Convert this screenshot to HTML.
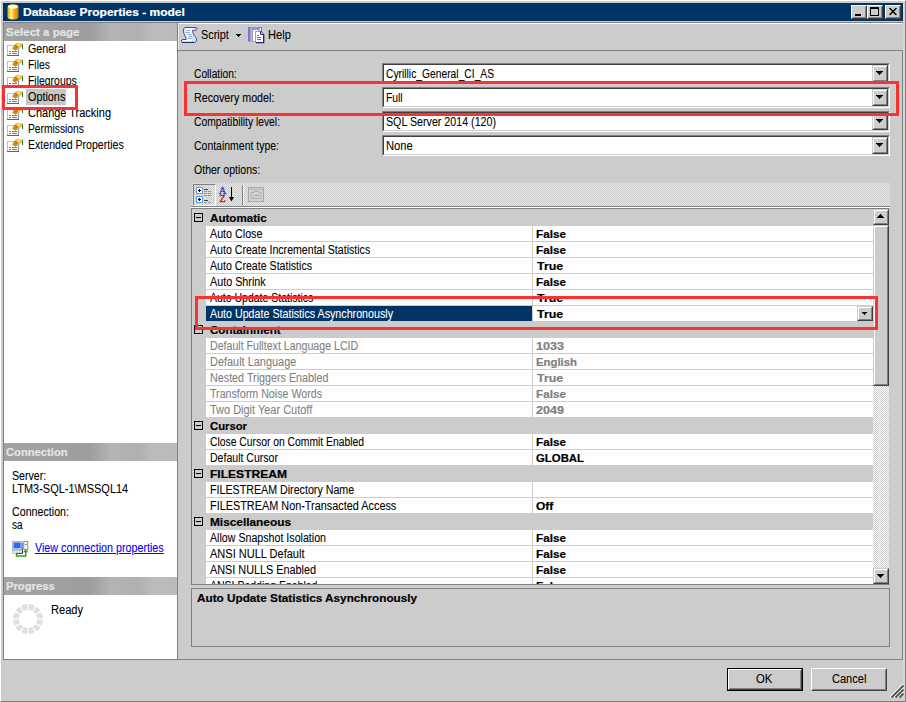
<!DOCTYPE html>
<html><head><meta charset="utf-8"><title>Database Properties - model</title>
<style>
html,body{margin:0;padding:0;}
body{width:906px;height:702px;position:relative;overflow:hidden;background:#cccccc;font:12px "Liberation Sans",sans-serif;}
div,span,svg{position:absolute;box-sizing:border-box;}
.t{white-space:pre;font:12px/14px "Liberation Sans",sans-serif;transform-origin:0 50%;-webkit-text-stroke:0.08px currentColor;}
.b{font:bold 11px/13px "Liberation Sans",sans-serif;-webkit-text-stroke:0.2px currentColor;}
.raised{background:#cccccc;border:1px solid;border-color:#cccccc #404040 #404040 #cccccc;}
.raised:before{content:"";position:absolute;left:0;top:0;right:0;bottom:0;border:1px solid;border-color:#fff #808080 #808080 #fff;}
.btn{background:#cccccc;border:1px solid;border-color:#fff #404040 #404040 #fff;}
.btn:before{content:"";position:absolute;left:0;top:0;right:0;bottom:0;border:1px solid;border-color:#cccccc #808080 #808080 #cccccc;}
.combo{background:#fff;border:1px solid;border-color:#808080 #fff #fff #808080;}
.combo:before{content:"";position:absolute;left:0;top:0;right:0;bottom:0;border:1px solid;border-color:#404040 #cccccc #cccccc #404040;}
.hdr{left:4px;width:173px;height:18px;background:linear-gradient(90deg,#a2a2a2 0,#9e9e9e 50%,#b4b4b4 62%,#b0b0b0 78%,#bcbcbc 86%,#bababa 100%);}
.arrow{width:0;height:0;border:solid transparent;border-width:3px 3px 0 3px;border-top-color:#000;}
.redbox{border:3px solid #fa3232;}
</style></head><body>

<div style="left:0;top:0;width:906px;height:702px;border:1px solid;border-color:#fff #808080 #808080 #fff;"></div>
<div style="left:903px;top:1px;width:2px;height:699px;background:#d6d6d6"></div>
<div style="left:3px;top:3px;width:900px;height:18px;background:#003366;"></div>
<svg style="left:6px;top:4px" width="14" height="16" viewBox="0 0 14 16"><defs><linearGradient id="cy" x1="0" x2="1" y1="0" y2="0"><stop offset="0" stop-color="#f0a020"/><stop offset=".18" stop-color="#ffcc40"/><stop offset=".36" stop-color="#ffff90"/><stop offset=".5" stop-color="#ffc060"/><stop offset=".68" stop-color="#ff9a10"/><stop offset=".85" stop-color="#d09a00"/><stop offset="1" stop-color="#c08000"/></linearGradient></defs><path d="M1.5 3 Q1.5 0.5 7 0.5 Q12.5 0.5 12.5 3 V13 Q12.5 15.5 7 15.5 Q1.5 15.5 1.5 13 Z" fill="url(#cy)"/><ellipse cx="7" cy="2.6" rx="5" ry="2" fill="#ffffd0"/></svg>
<div class="btn" style="left:851px;top:5px;width:16px;height:14px;">
<div style="left:3px;top:8px;width:6px;height:2px;background:#000"></div>
</div>
<div class="btn" style="left:867px;top:5px;width:16px;height:14px;">
<div style="left:2px;top:1px;width:9px;height:9px;border:1px solid #000;border-top-width:2px"></div>
</div>
<div class="btn" style="left:885px;top:5px;width:16px;height:14px;">
<svg style="left:3px;top:2px" width="8" height="7" viewBox="0 0 8 7"><path d="M0.6 0L7.4 7M7.4 0L0.6 7" stroke="#000" stroke-width="1.5" fill="none"/></svg>
</div>
<div style="left:3px;top:22px;width:900px;height:1px;background:#808080"></div>
<div style="left:3px;top:22px;width:1px;height:638px;background:#808080"></div>
<div style="left:4px;top:23px;width:173px;height:636px;background:#fff"></div>
<div style="left:177px;top:23px;width:1px;height:636px;background:#808080"></div>
<div style="left:178px;top:23px;width:1px;height:27px;background:#ececec"></div>
<div style="left:178px;top:23px;width:724px;height:1px;background:#fff"></div>
<div style="left:3px;top:659px;width:900px;height:1px;background:#808080"></div>
<div style="left:902px;top:50px;width:1px;height:610px;background:#808080"></div>
<div class="hdr" style="top:23px"></div>
<div class="hdr" style="top:443px"></div>
<div class="hdr" style="top:577px"></div>
<div style="left:26px;top:89px;width:40px;height:16px;background:#c6c6c6"></div>
<svg style="left:7px;top:42px" width="16" height="14" viewBox="0 0 16 14"><rect x="0.5" y="3.5" width="11" height="10" fill="#fff" stroke="#b8b8f0"/><path d="M0 13.5h12" stroke="#606060"/><path d="M11.5 4v9" stroke="#9090c0"/><path d="M2 9.5h2M5 9.5h5M2 11.5h2M5 11.5h5" stroke="#7070e0"/><path d="M5 6.5 L8 2 Q11 0.2 14.6 1 L15 4.6 L12 6 L9 8.8 Z" fill="#f0b030"/><path d="M9.5 2 L11.5 1 L14 1.6 L13.5 4 L11.5 4.5 Z" fill="#ffd860"/><path d="M6 6l2.4 2.4M7 4.4l2.6 2.8M8 3l2.4 2.6M6.2 6.8l3-3.6M7.6 8l3-3.6" stroke="#806010" stroke-width=".7"/><rect x="15" y="2" width="1" height="5" fill="#208040"/></svg>
<svg style="left:7px;top:58px" width="16" height="14" viewBox="0 0 16 14"><rect x="0.5" y="3.5" width="11" height="10" fill="#fff" stroke="#b8b8f0"/><path d="M0 13.5h12" stroke="#606060"/><path d="M11.5 4v9" stroke="#9090c0"/><path d="M2 9.5h2M5 9.5h5M2 11.5h2M5 11.5h5" stroke="#7070e0"/><path d="M5 6.5 L8 2 Q11 0.2 14.6 1 L15 4.6 L12 6 L9 8.8 Z" fill="#f0b030"/><path d="M9.5 2 L11.5 1 L14 1.6 L13.5 4 L11.5 4.5 Z" fill="#ffd860"/><path d="M6 6l2.4 2.4M7 4.4l2.6 2.8M8 3l2.4 2.6M6.2 6.8l3-3.6M7.6 8l3-3.6" stroke="#806010" stroke-width=".7"/><rect x="15" y="2" width="1" height="5" fill="#208040"/></svg>
<svg style="left:7px;top:74px" width="16" height="14" viewBox="0 0 16 14"><rect x="0.5" y="3.5" width="11" height="10" fill="#fff" stroke="#b8b8f0"/><path d="M0 13.5h12" stroke="#606060"/><path d="M11.5 4v9" stroke="#9090c0"/><path d="M2 9.5h2M5 9.5h5M2 11.5h2M5 11.5h5" stroke="#7070e0"/><path d="M5 6.5 L8 2 Q11 0.2 14.6 1 L15 4.6 L12 6 L9 8.8 Z" fill="#f0b030"/><path d="M9.5 2 L11.5 1 L14 1.6 L13.5 4 L11.5 4.5 Z" fill="#ffd860"/><path d="M6 6l2.4 2.4M7 4.4l2.6 2.8M8 3l2.4 2.6M6.2 6.8l3-3.6M7.6 8l3-3.6" stroke="#806010" stroke-width=".7"/><rect x="15" y="2" width="1" height="5" fill="#208040"/></svg>
<svg style="left:7px;top:90px" width="16" height="14" viewBox="0 0 16 14"><rect x="0.5" y="3.5" width="11" height="10" fill="#fff" stroke="#b8b8f0"/><path d="M0 13.5h12" stroke="#606060"/><path d="M11.5 4v9" stroke="#9090c0"/><path d="M2 9.5h2M5 9.5h5M2 11.5h2M5 11.5h5" stroke="#7070e0"/><path d="M5 6.5 L8 2 Q11 0.2 14.6 1 L15 4.6 L12 6 L9 8.8 Z" fill="#f0b030"/><path d="M9.5 2 L11.5 1 L14 1.6 L13.5 4 L11.5 4.5 Z" fill="#ffd860"/><path d="M6 6l2.4 2.4M7 4.4l2.6 2.8M8 3l2.4 2.6M6.2 6.8l3-3.6M7.6 8l3-3.6" stroke="#806010" stroke-width=".7"/><rect x="15" y="2" width="1" height="5" fill="#208040"/></svg>
<svg style="left:7px;top:106px" width="16" height="14" viewBox="0 0 16 14"><rect x="0.5" y="3.5" width="11" height="10" fill="#fff" stroke="#b8b8f0"/><path d="M0 13.5h12" stroke="#606060"/><path d="M11.5 4v9" stroke="#9090c0"/><path d="M2 9.5h2M5 9.5h5M2 11.5h2M5 11.5h5" stroke="#7070e0"/><path d="M5 6.5 L8 2 Q11 0.2 14.6 1 L15 4.6 L12 6 L9 8.8 Z" fill="#f0b030"/><path d="M9.5 2 L11.5 1 L14 1.6 L13.5 4 L11.5 4.5 Z" fill="#ffd860"/><path d="M6 6l2.4 2.4M7 4.4l2.6 2.8M8 3l2.4 2.6M6.2 6.8l3-3.6M7.6 8l3-3.6" stroke="#806010" stroke-width=".7"/><rect x="15" y="2" width="1" height="5" fill="#208040"/></svg>
<svg style="left:7px;top:122px" width="16" height="14" viewBox="0 0 16 14"><rect x="0.5" y="3.5" width="11" height="10" fill="#fff" stroke="#b8b8f0"/><path d="M0 13.5h12" stroke="#606060"/><path d="M11.5 4v9" stroke="#9090c0"/><path d="M2 9.5h2M5 9.5h5M2 11.5h2M5 11.5h5" stroke="#7070e0"/><path d="M5 6.5 L8 2 Q11 0.2 14.6 1 L15 4.6 L12 6 L9 8.8 Z" fill="#f0b030"/><path d="M9.5 2 L11.5 1 L14 1.6 L13.5 4 L11.5 4.5 Z" fill="#ffd860"/><path d="M6 6l2.4 2.4M7 4.4l2.6 2.8M8 3l2.4 2.6M6.2 6.8l3-3.6M7.6 8l3-3.6" stroke="#806010" stroke-width=".7"/><rect x="15" y="2" width="1" height="5" fill="#208040"/></svg>
<svg style="left:7px;top:138px" width="16" height="14" viewBox="0 0 16 14"><rect x="0.5" y="3.5" width="11" height="10" fill="#fff" stroke="#b8b8f0"/><path d="M0 13.5h12" stroke="#606060"/><path d="M11.5 4v9" stroke="#9090c0"/><path d="M2 9.5h2M5 9.5h5M2 11.5h2M5 11.5h5" stroke="#7070e0"/><path d="M5 6.5 L8 2 Q11 0.2 14.6 1 L15 4.6 L12 6 L9 8.8 Z" fill="#f0b030"/><path d="M9.5 2 L11.5 1 L14 1.6 L13.5 4 L11.5 4.5 Z" fill="#ffd860"/><path d="M6 6l2.4 2.4M7 4.4l2.6 2.8M8 3l2.4 2.6M6.2 6.8l3-3.6M7.6 8l3-3.6" stroke="#806010" stroke-width=".7"/><rect x="15" y="2" width="1" height="5" fill="#208040"/></svg>
<svg style="left:12px;top:541px" width="17" height="16" viewBox="0 0 17 16"><rect x="0.5" y="0.5" width="9.5" height="8" fill="#d4d8e8" stroke="#b0b0c0"/><rect x="1.6" y="1.6" width="7" height="5.6" fill="#2868f8"/><path d="M10.2 2v7" stroke="#5058a0"/><rect x="0.3" y="9.3" width="10" height="3" fill="#e4e4ec" stroke="#a8a8b8" stroke-width=".6"/><path d="M4 12.4h6.5v-3" fill="none" stroke="#303080" stroke-width="1"/><rect x="11.7" y="0.5" width="4" height="8" fill="#f4f6fa" stroke="#9090a0"/><path d="M12.5 3.5h2.5" stroke="#a0a0b0"/><path d="M4.5 12.8 V15 H13.7 V9.5" fill="none" stroke="#30a010" stroke-width="1.4"/><path d="M11 11.3 L13.7 8.3 L16.4 11.3 Z" fill="#30a010"/></svg>
<svg style="left:12px;top:603px" width="32" height="32" viewBox="0 0 32 32"><g fill="#e0e0e0"><path d="M24.99 16.47L30.98 16.79A15 15 0 0 1 29.37 22.81L24.02 20.09A9 9 0 0 0 24.99 16.47Z"/><path d="M23.55 20.90L28.58 24.17A15 15 0 0 1 24.17 28.58L20.90 23.55A9 9 0 0 0 23.55 20.90Z"/><path d="M20.09 24.02L22.81 29.37A15 15 0 0 1 16.79 30.98L16.47 24.99A9 9 0 0 0 20.09 24.02Z"/><path d="M15.53 24.99L15.21 30.98A15 15 0 0 1 9.19 29.37L11.91 24.02A9 9 0 0 0 15.53 24.99Z"/><path d="M11.10 23.55L7.83 28.58A15 15 0 0 1 3.42 24.17L8.45 20.90A9 9 0 0 0 11.10 23.55Z"/><path d="M7.98 20.09L2.63 22.81A15 15 0 0 1 1.02 16.79L7.01 16.47A9 9 0 0 0 7.98 20.09Z"/><path d="M7.01 15.53L1.02 15.21A15 15 0 0 1 2.63 9.19L7.98 11.91A9 9 0 0 0 7.01 15.53Z"/><path d="M8.45 11.10L3.42 7.83A15 15 0 0 1 7.83 3.42L11.10 8.45A9 9 0 0 0 8.45 11.10Z"/><path d="M11.91 7.98L9.19 2.63A15 15 0 0 1 15.21 1.02L15.53 7.01A9 9 0 0 0 11.91 7.98Z"/><path d="M16.47 7.01L16.79 1.02A15 15 0 0 1 22.81 2.63L20.09 7.98A9 9 0 0 0 16.47 7.01Z"/><path d="M20.90 8.45L24.17 3.42A15 15 0 0 1 28.58 7.83L23.55 11.10A9 9 0 0 0 20.90 8.45Z"/><path d="M24.02 11.91L29.37 9.19A15 15 0 0 1 30.98 15.21L24.99 15.53A9 9 0 0 0 24.02 11.91Z"/></g></svg>
<div style="left:178px;top:50px;width:724px;height:1px;background:#808080"></div>
<svg style="left:181px;top:27px" width="17" height="17" viewBox="0 0 17 17"><path d="M4 0.5 H14 Q16.3 0.8 16.2 2 Q16 3.4 13.5 3.4 H11.6 Q11.3 6 13 8 Q15.6 10.5 15.6 13 Q15.4 15.5 13 15.5 H2 Q0.5 15.5 0.5 14 Q0.5 12.5 2 12.5 H5.2 Q5.4 11 4 9 Q2.4 6.5 2.5 3 Q2.6 1 4 0.5Z" fill="#f6f8ff" stroke="#484880" stroke-width="1"/><path d="M12 8 Q15 11 14.8 13 Q14.5 14.8 12.5 14.8 H11 V12 H6 L9 8Z" fill="#c8e4ff"/><path d="M1.2 14h9.5" stroke="#fff" stroke-width="1.2"/><path d="M1 15.4h12" stroke="#282870" stroke-width="1.2"/><path d="M4.5 3.5h4.5M4.5 5.5h4.5M5.5 7.5h5M7.5 9.5h3.5M7.5 11.5h3.5" stroke="#88b8f0"/><ellipse cx="14" cy="2" rx="1.5" ry="0.9" fill="#c0c0ff"/></svg>
<div style="left:236px;top:34px;width:5px;height:1px;background:#000"></div><div style="left:237px;top:35px;width:3px;height:1px;background:#000"></div><div style="left:238px;top:36px;width:1px;height:1px;background:#000"></div>
<svg style="left:248px;top:27px" width="17" height="17" viewBox="0 0 17 17"><rect x="0" y="0" width="10.5" height="14.5" fill="#9494dc"/><rect x="0" y="0" width="2" height="14.5" fill="#7878c0"/><rect x="2.5" y="1" width="1.5" height="13" fill="#b0b0f0"/><rect x="4.5" y="2.5" width="6.5" height="12" fill="#fff" stroke="#a0a0a8"/><rect x="11" y="0.3" width="2.4" height="4.5" fill="#fff" stroke="#5050b0" stroke-width=".8"/><path d="M7.5 4.5 H12.5 L15.5 7.5 V15.5 H7.5Z" fill="#fff" stroke="#a0a0a8"/><path d="M12.5 4.5 L15.7 7.7 V15.7 H8" fill="none" stroke="#202070" stroke-width="1.3"/><path d="M12.5 4.5 V7.5 H15.5" fill="#e0e0ff" stroke="#303080"/><path d="M9 8.5h2M9 10.5h4M9 12.5h4" stroke="#6464c4"/></svg>
<div class="combo" style="left:382px;top:63px;width:508px;height:21px;"></div>
<div class="raised" style="left:872px;top:65px;width:16px;height:17px;"><div style="left:3px;top:5px;width:7px;height:1px;background:#000"></div><div style="left:4px;top:6px;width:5px;height:1px;background:#000"></div><div style="left:5px;top:7px;width:3px;height:1px;background:#000"></div><div style="left:6px;top:8px;width:1px;height:1px;background:#000"></div></div>
<div class="combo" style="left:382px;top:87px;width:508px;height:21px;"></div>
<div class="raised" style="left:872px;top:89px;width:16px;height:17px;"><div style="left:3px;top:5px;width:7px;height:1px;background:#000"></div><div style="left:4px;top:6px;width:5px;height:1px;background:#000"></div><div style="left:5px;top:7px;width:3px;height:1px;background:#000"></div><div style="left:6px;top:8px;width:1px;height:1px;background:#000"></div></div>
<div class="combo" style="left:382px;top:111px;width:508px;height:21px;"></div>
<div class="raised" style="left:872px;top:113px;width:16px;height:17px;"><div style="left:3px;top:5px;width:7px;height:1px;background:#000"></div><div style="left:4px;top:6px;width:5px;height:1px;background:#000"></div><div style="left:5px;top:7px;width:3px;height:1px;background:#000"></div><div style="left:6px;top:8px;width:1px;height:1px;background:#000"></div></div>
<div class="combo" style="left:382px;top:135px;width:508px;height:21px;"></div>
<div class="raised" style="left:872px;top:137px;width:16px;height:17px;"><div style="left:3px;top:5px;width:7px;height:1px;background:#000"></div><div style="left:4px;top:6px;width:5px;height:1px;background:#000"></div><div style="left:5px;top:7px;width:3px;height:1px;background:#000"></div><div style="left:6px;top:8px;width:1px;height:1px;background:#000"></div></div>
<div style="left:192px;top:183px;width:698px;height:23px;background:repeating-conic-gradient(#cccccc 0 25%,#e6e6e6 0 50%) 0 0/2px 2px;"></div>
<div style="left:191px;top:206px;width:699px;height:1px;background:#808080"></div>
<div style="left:191px;top:207px;width:699px;height:1px;background:#fff"></div>
<div style="left:193px;top:184px;width:23px;height:22px;border:1px solid;border-color:#808080 #fff #fff #808080;"></div>
<svg style="left:196px;top:187px" width="17" height="17" viewBox="0 0 17 17"><g><rect x="0.5" y="0.5" width="6" height="6" fill="#fff" stroke="#60a0e8"/><path d="M2 3.5h3M3.5 2v3" stroke="#000"/><rect x="0.5" y="9.5" width="6" height="6" fill="#fff" stroke="#60a0e8"/><path d="M2 12.5h3M3.5 11v3" stroke="#000"/><path d="M8 2.5h4M8 13.5h4" stroke="#404040"/><path d="M8 4.5h3M12 4.5h3M8 6.5h3M12 6.5h3M8 8.5h3M12 8.5h3M8 15.5h3M12 15.5h3" stroke="#70a0c0"/></g></svg>
<span class="t" style="left:218.8px;top:186px;-webkit-text-stroke:0.3px;font:10.5px/10px 'Liberation Serif',serif;color:#2040d0;">A</span>
<span class="t" style="left:219.3px;top:194px;-webkit-text-stroke:0.3px;font:10.5px/10px 'Liberation Serif',serif;color:#b02030;">Z</span>
<svg style="left:229px;top:187px" width="6" height="15" viewBox="0 0 6 15"><path d="M2.5 0v12" stroke="#000"/><path d="M0 10h5l-2.5 4.6z" fill="#000"/></svg>
<div style="left:242px;top:185px;width:1px;height:20px;background:#808080"></div><div style="left:243px;top:185px;width:1px;height:20px;background:#fff"></div>
<svg style="left:248px;top:187px" width="16" height="15" viewBox="0 0 16 15"><rect x="0.5" y="0.5" width="15" height="14" fill="#d4d4d4" stroke="#a8a8a8"/><path d="M1 2.5h14" stroke="#b4b4b4"/><path d="M3 5.5h3v-1h5v1h2v6H3z" fill="none" stroke="#b0b0b0"/><path d="M5 8.5h1M7 8.5h4M5 10.5h1" stroke="#a0a0a0"/></svg>
<div style="left:191px;top:208px;width:699px;height:377px;border:1px solid #808080;border-right-color:#cccccc;background:#cccccc;overflow:hidden;">
<div style="left:2px;top:4px;width:9px;height:9px;border:1px solid #000;"><div style="left:1px;top:3px;width:5px;height:1px;background:#000"></div></div>
<div style="left:14px;top:17px;width:326px;height:15px;background:#fff"></div>
<div style="left:341px;top:17px;width:340px;height:15px;background:#fff"></div>
<div style="left:14px;top:33px;width:326px;height:15px;background:#fff"></div>
<div style="left:341px;top:33px;width:340px;height:15px;background:#fff"></div>
<div style="left:14px;top:49px;width:326px;height:15px;background:#fff"></div>
<div style="left:341px;top:49px;width:340px;height:15px;background:#fff"></div>
<div style="left:14px;top:65px;width:326px;height:15px;background:#fff"></div>
<div style="left:341px;top:65px;width:340px;height:15px;background:#fff"></div>
<div style="left:14px;top:81px;width:326px;height:15px;background:#fff"></div>
<div style="left:341px;top:81px;width:340px;height:15px;background:#fff"></div>
<div style="left:14px;top:97px;width:326px;height:15px;background:#003366"></div>
<div style="left:341px;top:97px;width:340px;height:15px;background:#fff"></div>
<div style="left:2px;top:116px;width:9px;height:9px;border:1px solid #000;"><div style="left:1px;top:3px;width:5px;height:1px;background:#000"></div></div>
<div style="left:14px;top:129px;width:326px;height:15px;background:#fff"></div>
<div style="left:341px;top:129px;width:340px;height:15px;background:#fff"></div>
<div style="left:14px;top:145px;width:326px;height:15px;background:#fff"></div>
<div style="left:341px;top:145px;width:340px;height:15px;background:#fff"></div>
<div style="left:14px;top:161px;width:326px;height:15px;background:#fff"></div>
<div style="left:341px;top:161px;width:340px;height:15px;background:#fff"></div>
<div style="left:14px;top:177px;width:326px;height:15px;background:#fff"></div>
<div style="left:341px;top:177px;width:340px;height:15px;background:#fff"></div>
<div style="left:14px;top:193px;width:326px;height:15px;background:#fff"></div>
<div style="left:341px;top:193px;width:340px;height:15px;background:#fff"></div>
<div style="left:2px;top:212px;width:9px;height:9px;border:1px solid #000;"><div style="left:1px;top:3px;width:5px;height:1px;background:#000"></div></div>
<div style="left:14px;top:225px;width:326px;height:15px;background:#fff"></div>
<div style="left:341px;top:225px;width:340px;height:15px;background:#fff"></div>
<div style="left:14px;top:241px;width:326px;height:15px;background:#fff"></div>
<div style="left:341px;top:241px;width:340px;height:15px;background:#fff"></div>
<div style="left:2px;top:260px;width:9px;height:9px;border:1px solid #000;"><div style="left:1px;top:3px;width:5px;height:1px;background:#000"></div></div>
<div style="left:14px;top:273px;width:326px;height:15px;background:#fff"></div>
<div style="left:341px;top:273px;width:340px;height:15px;background:#fff"></div>
<div style="left:14px;top:289px;width:326px;height:15px;background:#fff"></div>
<div style="left:341px;top:289px;width:340px;height:15px;background:#fff"></div>
<div style="left:2px;top:308px;width:9px;height:9px;border:1px solid #000;"><div style="left:1px;top:3px;width:5px;height:1px;background:#000"></div></div>
<div style="left:14px;top:321px;width:326px;height:15px;background:#fff"></div>
<div style="left:341px;top:321px;width:340px;height:15px;background:#fff"></div>
<div style="left:14px;top:337px;width:326px;height:15px;background:#fff"></div>
<div style="left:341px;top:337px;width:340px;height:15px;background:#fff"></div>
<div style="left:14px;top:353px;width:326px;height:15px;background:#fff"></div>
<div style="left:341px;top:353px;width:340px;height:15px;background:#fff"></div>
<div style="left:14px;top:369px;width:326px;height:15px;background:#fff"></div>
<div style="left:341px;top:369px;width:340px;height:15px;background:#fff"></div>
<span class="t b" style="left:18.3px;top:2.5px;color:#000;transform:scaleX(1.0543);">Automatic</span>
<span class="t" style="left:18.3px;top:17.5px;color:#000;transform:scaleX(0.8926);">Auto Close</span>
<span class="t b" style="left:344.4px;top:18.5px;color:#000;transform:scaleX(1.0661);">False</span>
<span class="t" style="left:18.3px;top:33.5px;color:#000;transform:scaleX(0.8830);">Auto Create Incremental Statistics</span>
<span class="t b" style="left:344.4px;top:34.5px;color:#000;transform:scaleX(1.0661);">False</span>
<span class="t" style="left:18.3px;top:49.5px;color:#000;transform:scaleX(0.8840);">Auto Create Statistics</span>
<span class="t b" style="left:345.0px;top:50.5px;color:#000;transform:scaleX(1.1276);">True</span>
<span class="t" style="left:18.3px;top:65.5px;color:#000;transform:scaleX(0.8977);">Auto Shrink</span>
<span class="t b" style="left:344.4px;top:66.5px;color:#000;transform:scaleX(1.0661);">False</span>
<span class="t" style="left:18.3px;top:81.5px;color:#000;transform:scaleX(0.8750);">Auto Update Statistics</span>
<span class="t b" style="left:345.0px;top:82.5px;color:#000;transform:scaleX(1.1276);">True</span>
<span class="t" style="left:18.3px;top:97.5px;color:#fff;transform:scaleX(0.8907);">Auto Update Statistics Asynchronously</span>
<span class="t b" style="left:345.0px;top:98.5px;color:#000;transform:scaleX(1.1276);">True</span>
<span class="t b" style="left:17.7px;top:114.5px;color:#000;transform:scaleX(1.0500);">Containment</span>
<span class="t" style="left:17.5px;top:129.5px;color:#808080;transform:scaleX(0.8851);">Default Fulltext Language LCID</span>
<span class="t b" style="left:344.4px;top:130.5px;color:#808080;transform:scaleX(1.1477);">1033</span>
<span class="t" style="left:17.5px;top:145.5px;color:#808080;transform:scaleX(0.9108);">Default Language</span>
<span class="t b" style="left:344.4px;top:146.5px;color:#808080;transform:scaleX(1.0293);">English</span>
<span class="t" style="left:17.5px;top:161.5px;color:#808080;transform:scaleX(0.8964);">Nested Triggers Enabled</span>
<span class="t b" style="left:345.0px;top:162.5px;color:#808080;transform:scaleX(1.1276);">True</span>
<span class="t" style="left:18.3px;top:177.5px;color:#808080;transform:scaleX(0.8887);">Transform Noise Words</span>
<span class="t b" style="left:344.4px;top:178.5px;color:#808080;transform:scaleX(1.0661);">False</span>
<span class="t" style="left:18.3px;top:193.5px;color:#808080;transform:scaleX(0.9138);">Two Digit Year Cutoff</span>
<span class="t b" style="left:344.4px;top:194.5px;color:#808080;transform:scaleX(1.1477);">2049</span>
<span class="t b" style="left:17.7px;top:210.5px;color:#000;transform:scaleX(1.0260);">Cursor</span>
<span class="t" style="left:17.5px;top:225.5px;color:#000;transform:scaleX(0.8615);">Close Cursor on Commit Enabled</span>
<span class="t b" style="left:344.4px;top:226.5px;color:#000;transform:scaleX(1.0661);">False</span>
<span class="t" style="left:17.5px;top:241.5px;color:#000;transform:scaleX(0.8788);">Default Cursor</span>
<span class="t b" style="left:344.4px;top:242.5px;color:#000;transform:scaleX(1.0333);">GLOBAL</span>
<span class="t b" style="left:17.7px;top:258.5px;color:#000;transform:scaleX(1.0956);">FILESTREAM</span>
<span class="t" style="left:17.5px;top:273.5px;color:#000;transform:scaleX(0.8900);">FILESTREAM Directory Name</span>
<span class="t" style="left:17.5px;top:289.5px;color:#000;transform:scaleX(0.9060);">FILESTREAM Non-Transacted Access</span>
<span class="t b" style="left:344.4px;top:290.5px;color:#000;transform:scaleX(1.0887);">Off</span>
<span class="t b" style="left:17.7px;top:306.5px;color:#000;transform:scaleX(1.0771);">Miscellaneous</span>
<span class="t" style="left:18.3px;top:321.5px;color:#000;transform:scaleX(0.8872);">Allow Snapshot Isolation</span>
<span class="t b" style="left:344.4px;top:322.5px;color:#000;transform:scaleX(1.0661);">False</span>
<span class="t" style="left:18.3px;top:337.5px;color:#000;transform:scaleX(0.9180);">ANSI NULL Default</span>
<span class="t b" style="left:344.4px;top:338.5px;color:#000;transform:scaleX(1.0661);">False</span>
<span class="t" style="left:18.3px;top:353.5px;color:#000;transform:scaleX(0.9037);">ANSI NULLS Enabled</span>
<span class="t b" style="left:344.4px;top:354.5px;color:#000;transform:scaleX(1.0661);">False</span>
<span class="t" style="left:18.3px;top:369.5px;color:#000;transform:scaleX(0.8750);">ANSI Padding Enabled</span>
<span class="t b" style="left:344.4px;top:370.5px;color:#000;transform:scaleX(1.0661);">False</span>
<div class="raised" style="left:665px;top:97px;width:16px;height:15px;"><div style="left:4px;top:5px;width:5px;height:1px;background:#000"></div><div style="left:5px;top:6px;width:3px;height:1px;background:#000"></div><div style="left:6px;top:7px;width:1px;height:1px;background:#000"></div></div>
<div style="left:681px;top:0px;width:16px;height:375px;background:repeating-conic-gradient(#fff 0 25%,#cccccc 0 50%) 0 0/2px 2px;"></div>
<div class="raised" style="left:681px;top:0px;width:16px;height:16px;"><div style="left:3px;top:7px;width:7px;height:1px;background:#000"></div><div style="left:4px;top:6px;width:5px;height:1px;background:#000"></div><div style="left:5px;top:5px;width:3px;height:1px;background:#000"></div><div style="left:6px;top:4px;width:1px;height:1px;background:#000"></div></div>
<div class="raised" style="left:681px;top:16px;width:16px;height:161px;"></div>
<div class="raised" style="left:681px;top:359px;width:16px;height:16px;"><div style="left:3px;top:5px;width:7px;height:1px;background:#000"></div><div style="left:4px;top:6px;width:5px;height:1px;background:#000"></div><div style="left:5px;top:7px;width:3px;height:1px;background:#000"></div><div style="left:6px;top:8px;width:1px;height:1px;background:#000"></div></div>
</div>
<div style="left:191px;top:588px;width:699px;height:59px;border:1px solid #808080;"></div>
<div style="left:727px;top:668px;width:76px;height:23px;border:1px solid #000;"><div class="btn" style="left:0;top:0;width:74px;height:21px;"></div></div>
<div class="btn" style="left:811px;top:668px;width:76px;height:23px;"></div>
<svg style="left:890px;top:684px" width="14" height="14" viewBox="0 0 14 14"><g stroke="#fff" stroke-width="1.2"><path d="M0 13L13 0M4 13L13 4M8 13L13 8"/></g><g stroke="#505050" stroke-width="1.8"><path d="M1.5 13.5L13.5 1.5M5.5 13.5L13.5 5.5M9.5 13.5L13.5 9.5"/></g></svg>
<span class="t b" style="left:22.6px;top:5.5px;color:#fff;transform:scaleX(1.0891);">Database Properties - model</span>
<span class="t b" style="left:6.4px;top:25.5px;color:#e4e4e4;transform:scaleX(1.0451);">Select a page</span>
<span class="t b" style="left:6.4px;top:445.5px;color:#e4e4e4;transform:scaleX(1.0182);">Connection</span>
<span class="t b" style="left:6.4px;top:579.5px;color:#e4e4e4;transform:scaleX(1.0209);">Progress</span>
<span class="t" style="left:27.8px;top:41.5px;color:#000;transform:scaleX(0.8899);">General</span>
<span class="t" style="left:27.8px;top:57.5px;color:#000;transform:scaleX(0.8641);">Files</span>
<span class="t" style="left:27.8px;top:73.5px;color:#000;transform:scaleX(0.8692);">Filegroups</span>
<span class="t" style="left:27.8px;top:89.5px;color:#000;transform:scaleX(0.9019);">Options</span>
<span class="t" style="left:27.8px;top:105.5px;color:#000;transform:scaleX(0.9148);">Change Tracking</span>
<span class="t" style="left:27.8px;top:121.5px;color:#000;transform:scaleX(0.8553);">Permissions</span>
<span class="t" style="left:27.8px;top:137.5px;color:#000;transform:scaleX(0.8801);">Extended Properties</span>
<span class="t" style="left:12.0px;top:468.5px;color:#000;transform:scaleX(0.8840);">Server:</span>
<span class="t" style="left:12.3px;top:481.5px;color:#000;transform:scaleX(0.9138);">LTM3-SQL-1\MSSQL14</span>
<span class="t" style="left:12.1px;top:504.5px;color:#000;transform:scaleX(0.8900);">Connection:</span>
<span class="t" style="left:12.4px;top:517.5px;color:#000;transform:scaleX(0.8433);">sa</span>
<span class="t" style="left:34.8px;top:540.9px;color:#0000ff;transform:scaleX(0.8945);text-decoration:underline;">View connection properties</span>
<span class="t" style="left:50.9px;top:602.5px;color:#000;transform:scaleX(0.9254);">Ready</span>
<span class="t" style="left:201.0px;top:27.5px;color:#000;transform:scaleX(0.9059);">Script</span>
<span class="t" style="left:267.9px;top:27.5px;color:#000;transform:scaleX(0.9276);">Help</span>
<span class="t" style="left:193.8px;top:66.5px;color:#000;transform:scaleX(0.8535);">Collation:</span>
<span class="t" style="left:193.8px;top:90.5px;color:#000;transform:scaleX(0.8929);">Recovery model:</span>
<span class="t" style="left:193.8px;top:114.5px;color:#000;transform:scaleX(0.8596);">Compatibility level:</span>
<span class="t" style="left:193.8px;top:138.5px;color:#000;transform:scaleX(0.8728);">Containment type:</span>
<span class="t" style="left:193.8px;top:162.5px;color:#000;transform:scaleX(0.8783);">Other options:</span>
<span class="t" style="left:386.1px;top:66.5px;color:#000;transform:scaleX(0.8576);">Cyrillic_General_CI_AS</span>
<span class="t" style="left:386.1px;top:90.5px;color:#000;transform:scaleX(0.8582);">Full</span>
<span class="t" style="left:386.1px;top:114.5px;color:#000;transform:scaleX(0.8898);">SQL Server 2014 (120)</span>
<span class="t" style="left:386.1px;top:138.5px;color:#000;transform:scaleX(0.9307);">None</span>
<span class="t" style="left:756.4px;top:671.5px;color:#000;transform:scaleX(0.9398);">OK</span>
<span class="t" style="left:831.5px;top:671.5px;color:#000;transform:scaleX(0.9208);">Cancel</span>
<span class="t b" style="left:197.0px;top:591.5px;color:#000;transform:scaleX(1.0675);">Auto Update Statistics Asynchronously</span>
<div class="redbox" style="left:184px;top:81px;width:715px;height:35px;"></div>
<div class="redbox" style="left:195px;top:296px;width:683px;height:34px;"></div>
<div class="redbox" style="left:2px;top:85.2px;width:76px;height:25.2px;"></div>
</body></html>
